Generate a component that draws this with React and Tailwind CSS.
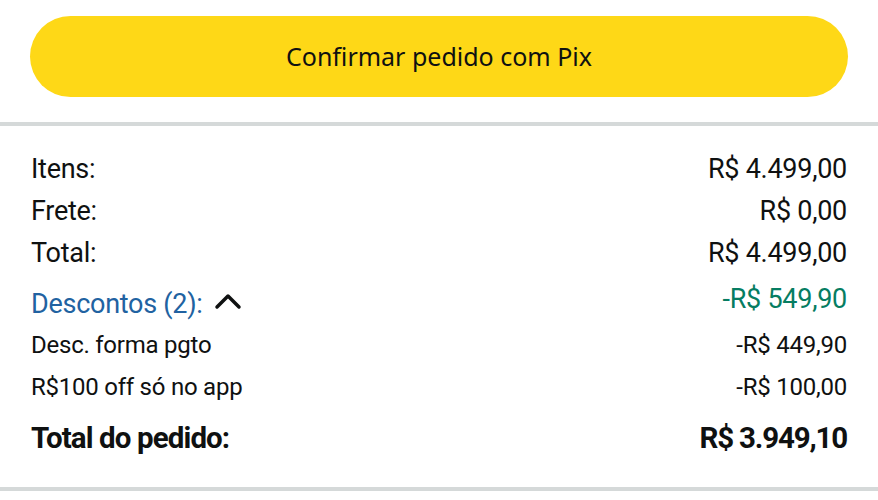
const rows = [
  { label: 'Itens:', value: 'R$ 4.499,00' },
  { label: 'Frete:', value: 'R$ 0,00' },
  { label: 'Total:', value: 'R$ 4.499,00' },
];

const discounts = [
  { label: 'Desc. forma pgto', value: '-R$ 449,90' },
  { label: 'R$100 off só no app', value: '-R$ 100,00' },
];

export default function App() {
  return (
    <div className="h-[500px] w-[878px] overflow-hidden bg-white font-['Roboto',sans-serif] text-[#0f1111]">
      <div className="px-[30px] pt-4 pb-[25px]">
        <button className="flex h-[81px] w-full items-center justify-center rounded-full bg-[#fed817] font-['Noto_Sans',sans-serif] text-[25px] text-[#0f1111]">
          Confirmar pedido com Pix
        </button>
      </div>

      <div className="h-1 w-full bg-[#d5d9d9]" />

      <div className="px-[31px] pt-[22px]">
        {rows.map((r) => (
          <div key={r.label} className="flex h-[42px] items-center justify-between text-[27px] tracking-[-0.01em]">
            <span>{r.label}</span>
            <span>{r.value}</span>
          </div>
        ))}

        <div className="flex h-[50px] items-center justify-between text-[27px] tracking-[-0.01em]">
          <span className="flex items-center pt-[10px] text-[#2162a1]">
            Descontos (2):
            <svg width="28" height="18" viewBox="0 0 28 18" className="ml-[11px] mb-[6px]" aria-hidden="true">
              <path d="M3 15 L14 4 L25 15" fill="none" stroke="#0f1111" strokeWidth="3.5" strokeLinecap="round" strokeLinejoin="round" />
            </svg>
          </span>
          <span className="text-[#067d62]">-R$ 549,90</span>
        </div>

        {discounts.map((d) => (
          <div key={d.label} className="flex h-[42px] items-center justify-between text-[24px] tracking-[-0.01em]">
            <span>{d.label}</span>
            <span>{d.value}</span>
          </div>
        ))}

        <div className="flex h-[60px] items-center justify-between text-[29.5px] font-bold tracking-[-0.03em]">
          <span>Total do pedido:</span>
          <span className="tracking-[-0.04em]">R$ 3.949,10</span>
        </div>
      </div>

      <div className="mt-[19px] h-1 w-full bg-[#d5d9d9]" />
    </div>
  );
}
